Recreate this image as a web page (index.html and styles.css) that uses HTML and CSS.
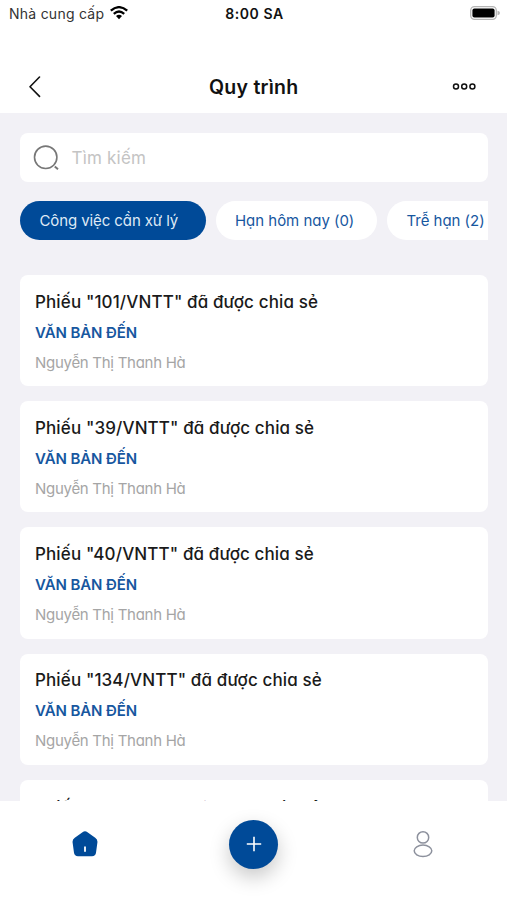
FILE: index.html
```html
<!DOCTYPE html>
<html lang="vi">
<head>
<meta charset="utf-8">
<meta name="viewport" content="width=device-width, initial-scale=1">
<title>Quy trình</title>
<link rel="stylesheet" href="styles.css">
</head>
<body>
<div class="app">
  <div class="status">
    <div class="carrier"><span>Nhà cung cấp</span>
      <svg class="wifi" width="18" height="14" viewBox="0 0 18 14" fill="none" stroke="#000" stroke-width="2.3"><path d="M.8 4.7Q9-2.4 17.2 4.7M3.8 7.8Q9 3.2 14.2 7.8"/><path d="M6 10.1Q9 7.6 12 10.1L9 13.2Z" fill="#000" stroke="none"/></svg>
    </div>
    <div class="clock">8:00 SA</div>
    <svg class="battery" width="30" height="14" viewBox="0 0 30 14"><rect x=".7" y=".7" width="25.6" height="12.6" rx="3.8" fill="#fff" stroke="#b5b5b5" stroke-width="1.3"/><rect x="2.4" y="2.5" width="22.2" height="9" rx="2" fill="#000"/><path d="M27.5 4.7Q30 5 30 7Q30 9 27.5 9.3Z" fill="#b5b5b5"/></svg>
  </div>
  <header class="header">
    <svg width="12" height="22" viewBox="0 0 12 22" fill="none" stroke="#111" stroke-width="1.6" stroke-linecap="round" stroke-linejoin="round"><path d="M10.5 1L1 10.7L10.5 20.4"/></svg>
    <h1>Quy trình</h1>
    <svg class="more" width="25" height="8" viewBox="0 0 25 8" fill="none" stroke="#111" stroke-width="1.5"><circle cx="4" cy="3.5" r="2.5"/><circle cx="12.2" cy="3.5" r="2.5"/><circle cx="20.4" cy="3.5" r="2.5"/></svg>
  </header>
  <main class="content">
    <label class="search">
      <svg width="26" height="26" viewBox="0 0 26 26" fill="none" stroke="#777" stroke-width="1.6"><circle cx="12.7" cy="12.3" r="11.2"/><path d="M21.8 21.6L25 24.3" stroke-width="2"/></svg>
      <span>Tìm kiếm</span>
    </label>
    <nav class="tabs">
      <div class="tab active"><span>Công việc cần xử lý</span></div>
      <div class="tab today"><span>Hạn hôm nay (0)</span></div>
      <div class="tab late"><span>Trễ hạn (2)</span></div>
    </nav>
    <section class="list">
      <article class="card"><h2>Phiếu "101/VNTT" đã được chia sẻ</h2><h3>VĂN BẢN ĐẾN</h3><p>Nguyễn Thị Thanh Hà</p></article>
      <article class="card"><h2>Phiếu "39/VNTT" đã được chia sẻ</h2><h3>VĂN BẢN ĐẾN</h3><p>Nguyễn Thị Thanh Hà</p></article>
      <article class="card"><h2>Phiếu "40/VNTT" đã được chia sẻ</h2><h3>VĂN BẢN ĐẾN</h3><p>Nguyễn Thị Thanh Hà</p></article>
      <article class="card"><h2>Phiếu "134/VNTT" đã được chia sẻ</h2><h3>VĂN BẢN ĐẾN</h3><p>Nguyễn Thị Thanh Hà</p></article>
      <article class="card partial"><h2>Phiếu "135/VNTT" đã được chia sẻ</h2></article>
    </section>
  </main>
  <footer class="bottom">
    <div class="item"><svg width="26" height="26" viewBox="0 0 26 26"><path d="M10.5 1.2Q13 -.5 15.5 1.2L23.2 6.7Q25.8 8.6 25.4 11.5L24 21.8Q23.5 25.2 20 25.2H6Q2.5 25.2 2 21.8L.6 11.5Q.2 8.6 2.8 6.7Z" fill="#004a98"/><path d="M13 15.5V20.7" stroke="#fff" stroke-width="1.8"/></svg></div>
    <div class="item"><div class="add"><svg width="16" height="16" viewBox="0 0 16 16" stroke="#fff" stroke-width="1.6"><path d="M8 .8V15.2M.8 8H15.2"/></svg></div></div>
    <div class="item"><svg width="20" height="28" viewBox="0 0 20 28" fill="none" stroke="#8d919d" stroke-width="1.5"><circle cx="10" cy="7.4" r="5.7"/><ellipse cx="10" cy="20.8" rx="8.8" ry="5.7"/></svg></div>
  </footer>
</div>
</body>
</html>
```
FILE: styles.css
```css
* { box-sizing: border-box; }
body { margin: 0; font-family: Inter, "Liberation Sans", sans-serif; color: #111; background: #fff; }
h1, h2, h3, p { margin: 0; white-space: nowrap; }
.app { height: 900px; display: flex; flex-direction: column; overflow: hidden; }
.status { height: 28px; flex: none; display: grid; grid-template-columns: 1fr auto 1fr; align-items: center; padding: 0 7px 2px 9px; font-size: 14px; }
.carrier { display: flex; align-items: center; gap: 6px; color: #333; letter-spacing: .25px; }
.wifi { margin-top: -1px; }
.clock { font-weight: 600; letter-spacing: .55px; }
.battery { justify-self: end; }
.header { height: 85px; flex: none; display: grid; grid-template-columns: 1fr auto 1fr; align-items: center; padding: 33px 30px 0 28.5px; }
.header h1 { padding-bottom: 1px; font-size: 19.5px; line-height: 24px; font-weight: 600; letter-spacing: .25px; transform: translateX(1px); }
.more { justify-self: end; }
.content { flex: 1; min-height: 0; overflow: hidden; background: #f2f1f6; padding: 20px 19.5px 0 20px; }
.search { height: 49px; background: #fff; border-radius: 8px; display: flex; align-items: center; gap: 12.5px; padding-left: 13px; font-size: 17px; letter-spacing: .2px; color: #c4c4c4; font-feature-settings: "cv11"; }
.tabs { display: flex; gap: 10px; overflow: hidden; margin-top: 19px; height: 39px; }
.tab { flex: none; display: flex; align-items: center; padding: 0 0 0 19.5px; border-radius: 20px; background: #fff; color: #17579f; font-size: 15px; letter-spacing: -.03px; white-space: nowrap; font-feature-settings: "cv11"; }
.active { width: 185.5px; background: #004a98; color: #dfe9f5; letter-spacing: -.1px; }
.today { width: 161.5px; }
.late { width: 124px; }
.list { display: flex; flex-direction: column; gap: 15px; margin-top: 35px; font-feature-settings: "cv11"; }
.card { flex: none; height: 111.2px; background: #fff; border-radius: 8px; padding: 15px; }
.card:nth-child(4) { padding-top: 14.5px; }
.card h2 { font-size: 17px; line-height: 24px; font-weight: 500; letter-spacing: .12px; color: #1a1a1a; }
.card h3 { margin-top: 9px; font-size: 15px; line-height: 20px; font-weight: 600; letter-spacing: -.1px; color: #17579f; }
.card p { margin-top: 10px; font-size: 15px; line-height: 20px; letter-spacing: -.28px; color: #a5a5a5; }
.card.partial { padding-top: 16px; }
.bottom { height: 99.5px; flex: none; display: grid; grid-template-columns: repeat(3, 1fr); background: #fff; padding-bottom: 12px; }
.item { display: grid; place-items: center; }
.add { width: 49px; height: 49px; border-radius: 50%; background: #004a98; display: grid; place-items: center; box-shadow: 0 8px 20px rgba(0, 0, 0, .22); }
```
